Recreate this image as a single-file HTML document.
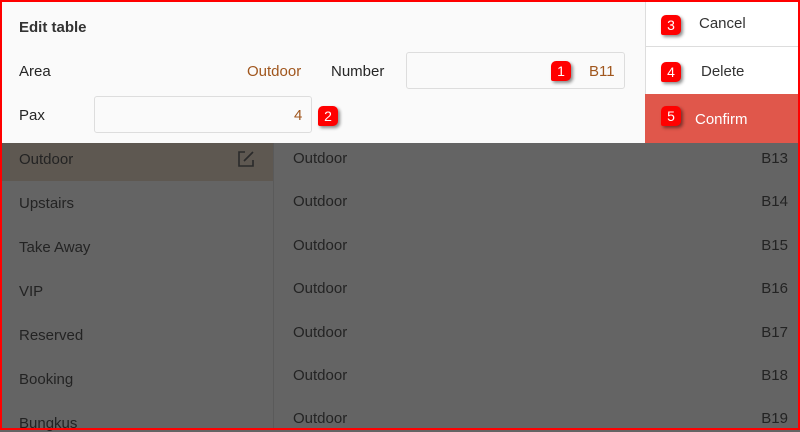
<!DOCTYPE html>
<html><head><style>
*{margin:0;padding:0;box-sizing:border-box}
body{width:800px;height:430px;overflow:hidden;font-family:"Liberation Sans",sans-serif;background:#646464;position:relative}
.a{position:absolute}
.t{font-size:15px;color:#262626}
.panel{left:0;top:0;width:800px;height:143px;background:#fafafa}
.inp{border:1px solid #ddd;border-radius:3px;background:#fafafa}
.b{width:20px;height:20px;background:#f00;color:#fff;border-radius:5px 5px 5px 2px;font-size:14px;text-align:center;line-height:20px;box-shadow:2px 2px 3px rgba(0,0,0,.45)}
.or{color:#a0561d}
.row{font-size:15px;color:#232323}
</style></head><body>
<div class="a" style="left:0;top:137px;width:274px;height:44px;background:#5e5851"></div>
<div class="a" style="left:273px;top:143px;width:1px;height:287px;background:#5a5a5a"></div>
<div class="a row" style="left:19px;top:151px">Outdoor</div>
<svg class="a" style="left:237px;top:150px" width="18" height="18" viewBox="0 0 18 18"><path d="M8 2H2v14h14v-6" fill="none" stroke="#2a2a2a" stroke-width="1.6"/><path d="M7 11l9-9" stroke="#2a2a2a" stroke-width="1.6"/></svg>
<div class="a row" style="left:19px;top:195px">Upstairs</div>
<div class="a row" style="left:19px;top:239px">Take Away</div>
<div class="a row" style="left:19px;top:283px">VIP</div>
<div class="a row" style="left:19px;top:327px">Reserved</div>
<div class="a row" style="left:19px;top:371px">Booking</div>
<div class="a row" style="left:19px;top:415px">Bungkus</div>
<div class="a row" style="left:293px;top:150px">Outdoor</div><div class="a row" style="right:12px;top:150px">B13</div>
<div class="a row" style="left:293px;top:193px">Outdoor</div><div class="a row" style="right:12px;top:193px">B14</div>
<div class="a row" style="left:293px;top:237px">Outdoor</div><div class="a row" style="right:12px;top:237px">B15</div>
<div class="a row" style="left:293px;top:280px">Outdoor</div><div class="a row" style="right:12px;top:280px">B16</div>
<div class="a row" style="left:293px;top:324px">Outdoor</div><div class="a row" style="right:12px;top:324px">B17</div>
<div class="a row" style="left:293px;top:367px">Outdoor</div><div class="a row" style="right:12px;top:367px">B18</div>
<div class="a row" style="left:293px;top:410px">Outdoor</div><div class="a row" style="right:12px;top:410px">B19</div>

<div class="a panel"></div>
<div class="a" style="left:19px;top:19px;font-size:15px;font-weight:bold;color:#333">Edit table</div>
<div class="a t" style="left:19px;top:63px">Area</div>
<div class="a t or" style="left:247px;top:63px">Outdoor</div>
<div class="a t" style="left:331px;top:63px">Number</div>
<div class="a inp" style="left:406px;top:52px;width:219px;height:37px"></div>
<div class="a t or" style="left:589px;top:63px">B11</div>
<div class="a b" style="left:551px;top:61px">1</div>
<div class="a t" style="left:19px;top:107px">Pax</div>
<div class="a inp" style="left:94px;top:96px;width:218px;height:37px"></div>
<div class="a t or" style="left:294px;top:107px">4</div>
<div class="a b" style="left:318px;top:106px">2</div>

<div class="a" style="left:645px;top:0;width:155px;height:143px;background:#fff;border-left:1px solid #ddd"></div>
<div class="a" style="left:645px;top:46px;width:155px;height:1px;background:#ddd"></div>
<div class="a" style="left:645px;top:94px;width:155px;height:49px;background:#e0574b"></div>
<div class="a t" style="left:699px;top:15px;color:#333">Cancel</div>
<div class="a t" style="left:701px;top:63px;color:#333">Delete</div>
<div class="a t" style="left:695px;top:111px;color:#fff">Confirm</div>
<div class="a b" style="left:661px;top:15px">3</div>
<div class="a b" style="left:661px;top:62px">4</div>
<div class="a b" style="left:661px;top:106px">5</div>

<div class="a" style="left:0;top:0;width:800px;height:430px;border:2px solid #f00"></div>
</body></html>
